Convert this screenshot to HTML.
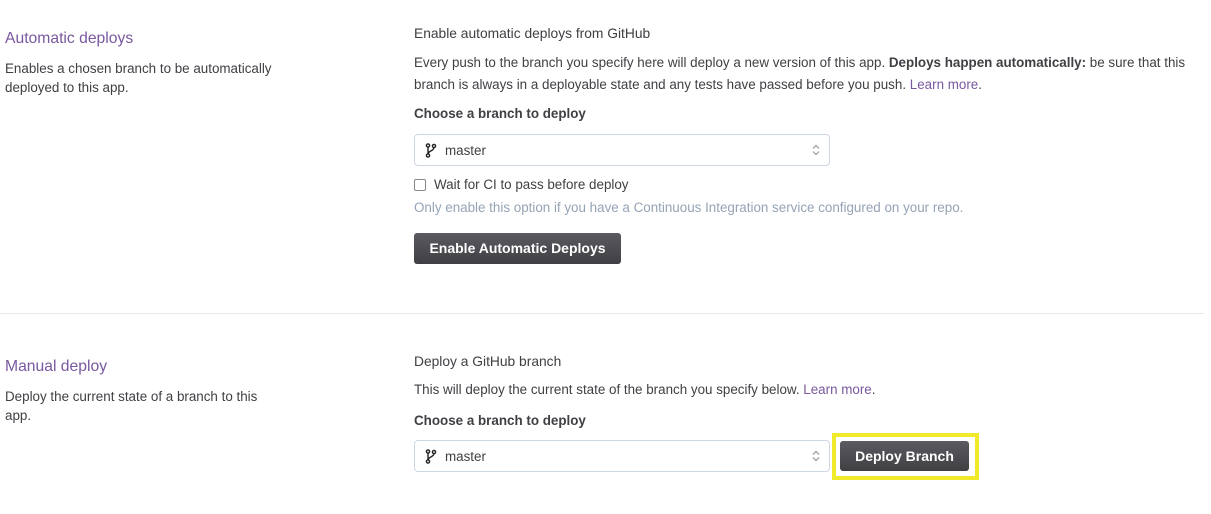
<!DOCTYPE html>
<html><head><meta charset="utf-8"><style>
*{box-sizing:border-box;margin:0;padding:0}
body{width:1211px;height:514px;background:#fff;font-family:"Liberation Sans",sans-serif;color:#3f3f44;position:relative;overflow:hidden;font-size:13.4px}
.a{position:absolute;white-space:nowrap}
.h{color:#79589f;font-size:15.7px}
.sel{position:absolute;left:414px;width:416px;height:32px;border:1px solid #cfd7e6;border-radius:4px;background:#fff}
.sel .t{position:absolute;left:30px;top:8px;font-size:13.4px}
.sel svg{position:absolute}
.btn{position:absolute;background:linear-gradient(#5a5a60,#3f3f44);color:#fff;font-weight:bold;border-radius:3px;text-align:center;font-size:14px}
a{color:#79589f;text-decoration:none}
.muted{color:#96a3b6}
</style></head><body>
<div class="a h" style="left:5px;top:30px">Automatic deploys</div>
<div class="a" style="left:5px;top:59px;line-height:19px">Enables a chosen branch to be automatically<br>deployed to this app.</div>
<div class="a" style="left:414px;top:26px;font-size:13.8px">Enable automatic deploys from GitHub</div>
<div class="a" style="left:414px;top:52px;line-height:22px">Every push to the branch you specify here will deploy a new version of this app. <b>Deploys happen automatically:</b> be sure that this<br>branch is always in a deployable state and any tests have passed before you push. <a>Learn more</a>.</div>
<div class="a" style="left:414px;top:106px;font-weight:bold">Choose a branch to deploy</div>
<div class="sel" style="top:134px">
<svg style="left:10px;top:8px" width="12" height="15" viewBox="0 0 12 15"><circle cx="3" cy="2.5" r="1.6" fill="none" stroke="#222" stroke-width="1.4"/><circle cx="3" cy="12.5" r="1.6" fill="none" stroke="#222" stroke-width="1.4"/><circle cx="9" cy="3" r="1.6" fill="none" stroke="#222" stroke-width="1.4"/><path d="M3 4v7M9 4.5C9 8 3 8 3 11" fill="none" stroke="#222" stroke-width="1.4"/></svg>
<span class="t">master</span>
<svg style="left:397px;top:9px" width="8" height="12" viewBox="0 0 8 12"><path d="M1 4.5L4 1.5L7 4.5M1 7.5L4 10.5L7 7.5" fill="none" stroke="#999" stroke-width="1.2"/></svg>
</div>
<div class="a" style="left:414px;top:179px;width:12px;height:12px;border:1px solid #888;border-radius:2px"></div>
<div class="a" style="left:434px;top:177px">Wait for CI to pass before deploy</div>
<div class="a muted" style="left:414px;top:200px">Only enable this option if you have a Continuous Integration service configured on your repo.</div>
<div class="btn" style="left:414px;top:233px;width:207px;height:31px;line-height:31px">Enable Automatic Deploys</div>
<div class="a" style="left:0;top:313px;width:1204px;height:1px;background:#e6e9ee"></div>
<div class="a h" style="left:5px;top:358px">Manual deploy</div>
<div class="a" style="left:5px;top:387px;line-height:19px">Deploy the current state of a branch to this<br>app.</div>
<div class="a" style="left:414px;top:354px;font-size:13.8px">Deploy a GitHub branch</div>
<div class="a" style="left:414px;top:382px">This will deploy the current state of the branch you specify below. <a>Learn more</a>.</div>
<div class="a" style="left:414px;top:413px;font-weight:bold">Choose a branch to deploy</div>
<div class="sel" style="top:440px">
<svg style="left:10px;top:8px" width="12" height="15" viewBox="0 0 12 15"><circle cx="3" cy="2.5" r="1.6" fill="none" stroke="#222" stroke-width="1.4"/><circle cx="3" cy="12.5" r="1.6" fill="none" stroke="#222" stroke-width="1.4"/><circle cx="9" cy="3" r="1.6" fill="none" stroke="#222" stroke-width="1.4"/><path d="M3 4v7M9 4.5C9 8 3 8 3 11" fill="none" stroke="#222" stroke-width="1.4"/></svg>
<span class="t">master</span>
<svg style="left:397px;top:9px" width="8" height="12" viewBox="0 0 8 12"><path d="M1 4.5L4 1.5L7 4.5M1 7.5L4 10.5L7 7.5" fill="none" stroke="#999" stroke-width="1.2"/></svg>
</div>
<div class="a" style="left:832px;top:433px;width:147px;height:47px;border:4px solid #f0ea2a"></div>
<div class="btn" style="left:840px;top:441px;width:129px;height:30px;line-height:30px">Deploy Branch</div>
</body></html>
